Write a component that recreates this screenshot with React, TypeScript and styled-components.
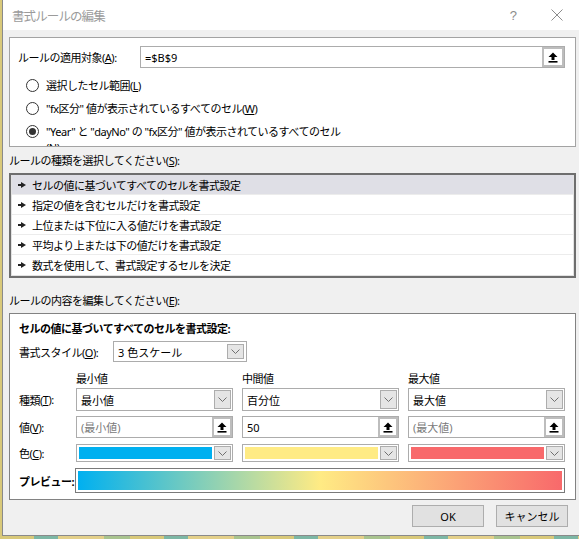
import React from 'react';
import styled, { createGlobalStyle } from 'styled-components';

const GlobalStyle = createGlobalStyle`
  html, body {
    margin: 0;
    padding: 0;
  }
  body {
    width: 579px;
    height: 539px;
    overflow: hidden;
    background: repeating-linear-gradient(90deg, #d9c97a 0 34px, #7db7a5 34px 58px, #e4d08a 58px 104px, #a9c48f 104px 130px);
    font-family: "Noto Sans", "Noto Sans CJK JP", sans-serif;
    font-size: 11px;
    letter-spacing: -0.5px;
    color: #000;
  }
`;

const Window = styled.div`
  margin-left: 2px;
  width: 576px;
  height: 535px;
  border-left: 1px solid #8a8a8a;
  border-bottom: 1px solid #8a8a8a;
  background: #f0f0f0;
  display: flex;
  flex-direction: column;
`;

const TitleBar = styled.div`
  height: 30px;
  flex-shrink: 0;
  background: #fff;
  display: flex;
  align-items: center;
  padding-left: 9px;
`;

const Title = styled.div`
  font-size: 12.5px;
  letter-spacing: -0.9px;
  color: #9b9b9b;
`;

const TitleButtons = styled.div`
  margin-left: auto;
  display: flex;
  height: 100%;
`;

const TitleButton = styled.div`
  width: 44px;
  display: flex;
  align-items: center;
  justify-content: center;
  color: #8c8c8c;
  font-family: "Liberation Sans", sans-serif;
  font-size: 13px;
`;

const Body = styled.div`
  padding: 7px 3px 0 6px;
  display: flex;
  flex-direction: column;
`;

const TopBox = styled.div`
  height: 110px;
  box-sizing: border-box;
  border: 1px solid #a3a3a3;
  background: #fff;
  overflow: hidden;
  padding: 8px 10px 0 8px;
`;

const TargetRow = styled.div`
  display: flex;
  align-items: center;
  height: 22px;
`;

const TargetLabel = styled.div`
  width: 122px;
  flex-shrink: 0;
`;

const InputBox = styled.div`
  flex: 1;
  height: 100%;
  box-sizing: border-box;
  display: flex;
  align-items: center;
  border: 1px solid #acacac;
  background: #fff;
`;

const InputText = styled.div<{ $muted?: boolean }>`
  flex: 1;
  padding-left: 4px;
  letter-spacing: 0;
  color: ${p => (p.$muted ? '#7a7a7a' : '#000')};
  white-space: nowrap;
`;

const UploadButton = styled.div<{ $w?: number }>`
  width: ${p => p.$w ?? 20}px;
  align-self: stretch;
  box-sizing: border-box;
  border: 2px solid #bdbdbd;
  background: #fff;
  display: flex;
  align-items: center;
  justify-content: center;
`;

const RadioGroup = styled.div`
  margin-top: 6px;
  padding-left: 8px;
`;

const RadioRow = styled.div`
  height: 23px;
  display: flex;
  align-items: flex-start;
  padding-top: 4px;
  box-sizing: border-box;
  gap: 7px;
`;

const RadioCircle = styled.div<{ $checked?: boolean }>`
  width: 13px;
  height: 13px;
  margin-top: 1px;
  flex-shrink: 0;
  box-sizing: border-box;
  border: 1px solid #333;
  border-radius: 50%;
  background: #fff;
  display: flex;
  align-items: center;
  justify-content: center;
  &::after {
    content: '';
    display: ${p => (p.$checked ? 'block' : 'none')};
    width: 7px;
    height: 7px;
    border-radius: 50%;
    background: #333;
  }
`;

const RadioLabel = styled.div<{ $max?: number }>`
  line-height: 16px;
  max-width: ${p => (p.$max ? `${p.$max}px` : 'none')};
`;

const SectionLabel = styled.div<{ $top: number }>`
  margin-top: ${p => p.$top}px;
  margin-bottom: 4px;
  line-height: 16px;
`;

const RuleList = styled.div`
  border: 2px solid #6e6e6e;
  box-shadow: inset 0 0 0 1px #e2e2e2;
  background: #fff;
  padding: 0 1px 1px;
`;

const RuleItem = styled.div<{ $selected?: boolean; $last?: boolean }>`
  height: 20px;
  box-sizing: border-box;
  display: flex;
  align-items: center;
  gap: 6px;
  padding-left: 6px;
  background: ${p => (p.$selected ? '#dfdfe6' : '#fff')};
  border-bottom: ${p => (p.$last ? 'none' : '1px solid #ececec')};
`;

const EditBox = styled.div`
  border: 1px solid #828282;
  background: #fff;
  padding: 5px 10px 6px 9px;
  display: flex;
  flex-direction: column;
`;

const BoldTitle = styled.div`
  line-height: 20px;
  font-weight: bold;
`;

const StyleRow = styled.div`
  margin-top: 2px;
  height: 21px;
  display: flex;
  align-items: center;
`;

const StyleLabel = styled.div`
  width: 94px;
  flex-shrink: 0;
`;

const SelectBox = styled.div<{ $w?: number }>`
  width: ${p => (p.$w ? `${p.$w}px` : 'auto')};
  height: 100%;
  box-sizing: border-box;
  display: flex;
  align-items: center;
  border: 1px solid #acacac;
  background: #fff;
`;

const DropButton = styled.div<{ $inset?: number }>`
  width: 17px;
  align-self: stretch;
  margin: ${p => p.$inset ?? 1}px;
  margin-left: 0;
  box-sizing: border-box;
  border: 1px solid #adadad;
  background: #e5e5e5;
  display: flex;
  align-items: center;
  justify-content: center;
`;

const Swatch = styled.div<{ $color: string }>`
  flex: 1;
  align-self: stretch;
  margin: 2px;
  background: ${p => p.$color};
`;

const GridRow = styled.div<{ $top: number; $h: number }>`
  margin-top: ${p => p.$top}px;
  height: ${p => p.$h}px;
  display: grid;
  grid-template-columns: 48px 157px 157px 157px;
  column-gap: 9px;
  align-items: center;
  > * {
    height: 100%;
  }
`;

const CellLabel = styled.div`
  display: flex;
  align-items: center;
`;

const PreviewRow = styled.div`
  margin-top: 6px;
  height: 25px;
  display: flex;
  align-items: center;
`;

const PreviewLabel = styled.div`
  width: 56px;
  flex-shrink: 0;
  font-weight: bold;
`;

const PreviewBar = styled.div`
  flex: 1;
  height: 100%;
  box-sizing: border-box;
  border: 1px solid #7a7a7a;
  padding: 2px;
  background: #fff;
  &::after {
    content: '';
    display: block;
    height: 100%;
    background: linear-gradient(90deg, #00b0f0 0%, #ffeb84 50%, #f8696b 100%);
  }
`;

const ButtonRow = styled.div`
  margin-top: 5px;
  display: flex;
  justify-content: flex-end;
  gap: 12px;
  padding-right: 8px;
`;

const Button = styled.div`
  width: 72px;
  height: 22px;
  box-sizing: border-box;
  border: 1px solid #adadad;
  background: #e1e1e1;
  letter-spacing: 0;
  display: flex;
  align-items: center;
  justify-content: center;
`;

const UploadIcon = () => (
  <svg width="10" height="11" viewBox="0 0 10 11">
    <polygon points="5,0.5 9.5,5 6.5,5 6.5,8 3.5,8 3.5,5 0.5,5" fill="#000" />
    <rect x="0.5" y="9" width="9" height="1.6" fill="#000" />
  </svg>
);

const Chevron = () => (
  <svg width="9" height="5" viewBox="0 0 9 5">
    <polyline points="0.5,0.5 4.5,4.5 8.5,0.5" fill="none" stroke="#707070" strokeWidth="1" />
  </svg>
);

const RuleArrow = () => (
  <svg width="8" height="6" viewBox="0 0 8 6">
    <rect x="0" y="2" width="4" height="2" fill="#222" />
    <polygon points="3,0 8,3 3,6" fill="#222" />
  </svg>
);

const CloseIcon = () => (
  <svg width="12" height="12" viewBox="0 0 12 12">
    <path d="M0.5 0.5 L11.5 11.5 M11.5 0.5 L0.5 11.5" stroke="#8c8c8c" strokeWidth="1" />
  </svg>
);

const rules = [
  'セルの値に基づいてすべてのセルを書式設定',
  '指定の値を含むセルだけを書式設定',
  '上位または下位に入る値だけを書式設定',
  '平均より上または下の値だけを書式設定',
  '数式を使用して、書式設定するセルを決定',
];

const columns = [
  { head: '最小値', type: '最小値', value: '(最小値)', muted: true, color: '#00b0f0' },
  { head: '中間値', type: '百分位', value: '50', muted: false, color: '#ffeb84' },
  { head: '最大値', type: '最大値', value: '(最大値)', muted: true, color: '#f8696b' },
];

export default function App() {
  return (
    <>
      <GlobalStyle />
      <Window>
        <TitleBar>
          <Title>書式ルールの編集</Title>
          <TitleButtons>
            <TitleButton>?</TitleButton>
            <TitleButton>
              <CloseIcon />
            </TitleButton>
          </TitleButtons>
        </TitleBar>
        <Body>
          <TopBox>
            <TargetRow>
              <TargetLabel>
                ルールの適用対象(<u>A</u>):
              </TargetLabel>
              <InputBox>
                <InputText>=$B$9</InputText>
                <UploadButton $w={22}>
                  <UploadIcon />
                </UploadButton>
              </InputBox>
            </TargetRow>
            <RadioGroup>
              <RadioRow>
                <RadioCircle />
                <RadioLabel>
                  選択したセル範囲(<u>L</u>)
                </RadioLabel>
              </RadioRow>
              <RadioRow>
                <RadioCircle />
                <RadioLabel>
                  "fx区分" 値が表示されているすべてのセル(<u>W</u>)
                </RadioLabel>
              </RadioRow>
              <RadioRow>
                <RadioCircle $checked />
                <RadioLabel $max={300}>
                  "Year" と "dayNo" の "fx区分" 値が表示されているすべてのセル(<u>N</u>)
                </RadioLabel>
              </RadioRow>
            </RadioGroup>
          </TopBox>

          <SectionLabel $top={6}>
            ルールの種類を選択してください(<u>S</u>):
          </SectionLabel>
          <RuleList>
            {rules.map((r, i) => (
              <RuleItem key={r} $selected={i === 0} $last={i === rules.length - 1}>
                <RuleArrow />
                {r}
              </RuleItem>
            ))}
          </RuleList>

          <SectionLabel $top={15}>
            ルールの内容を編集してください(<u>E</u>):
          </SectionLabel>
          <EditBox>
            <BoldTitle>セルの値に基づいてすべてのセルを書式設定:</BoldTitle>
            <StyleRow>
              <StyleLabel>
                書式スタイル(<u>O</u>):
              </StyleLabel>
              <SelectBox $w={134}>
                <InputText>3 色スケール</InputText>
                <DropButton $inset={2}>
                  <Chevron />
                </DropButton>
              </SelectBox>
            </StyleRow>

            <GridRow $top={8} $h={16}>
              <div />
              {columns.map(c => (
                <CellLabel key={c.head}>{c.head}</CellLabel>
              ))}
            </GridRow>
            <GridRow $top={2} $h={23}>
              <CellLabel>
                種類(<u>T</u>):
              </CellLabel>
              {columns.map(c => (
                <SelectBox key={c.head}>
                  <InputText>{c.type}</InputText>
                  <DropButton>
                    <Chevron />
                  </DropButton>
                </SelectBox>
              ))}
            </GridRow>
            <GridRow $top={5} $h={22}>
              <CellLabel>
                値(<u>V</u>):
              </CellLabel>
              {columns.map(c => (
                <InputBox key={c.head}>
                  <InputText $muted={c.muted}>{c.value}</InputText>
                  <UploadButton>
                    <UploadIcon />
                  </UploadButton>
                </InputBox>
              ))}
            </GridRow>
            <GridRow $top={6} $h={18}>
              <CellLabel>
                色(<u>C</u>):
              </CellLabel>
              {columns.map(c => (
                <SelectBox key={c.head}>
                  <Swatch $color={c.color} />
                  <DropButton>
                    <Chevron />
                  </DropButton>
                </SelectBox>
              ))}
            </GridRow>

            <PreviewRow>
              <PreviewLabel>プレビュー:</PreviewLabel>
              <PreviewBar />
            </PreviewRow>
          </EditBox>

          <ButtonRow>
            <Button>OK</Button>
            <Button>キャンセル</Button>
          </ButtonRow>
        </Body>
      </Window>
    </>
  );
}
